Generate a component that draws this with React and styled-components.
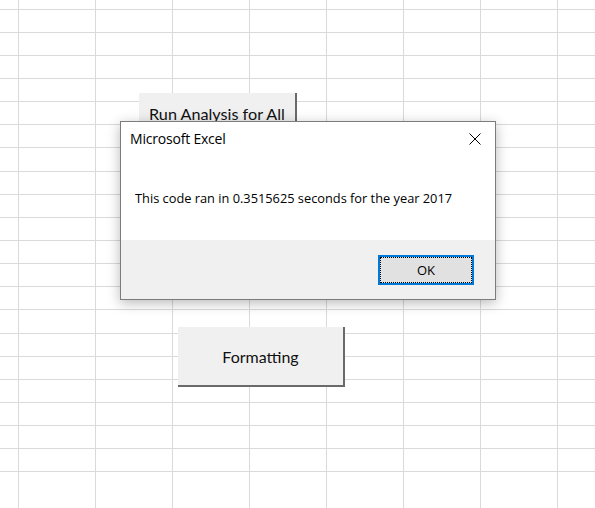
import React from "react";
import styled, { createGlobalStyle } from "styled-components";

const GlobalStyle = createGlobalStyle`
  html, body {
    margin: 0;
    padding: 0;
    background: #ffffff;
    overflow: hidden;
  }
`;

// row heights of the sheet, each one including its bottom grid line
const ROWS = [10, 23, 23, 23, 23, 23, 23, 24, 23, 23, 23, 23, 23, 23, 24, 23, 23, 23, 23, 23, 23, 40];
const COLS = [19, 77, 77, 77, 77, 77, 77, 77, 77];

const S = {
  Page: styled.div`
    position: relative;
    width: 595px;
    height: 508px;
    overflow: hidden;
    background: #ffffff;
  `,
  Sheet: styled.div`
    display: grid;
    grid-template-columns: ${COLS.map((c) => `${c}px`).join(" ")};
    grid-template-rows: ${ROWS.map((r) => `${r}px`).join(" ")};
  `,
  Cell: styled.div`
    box-sizing: border-box;
    border-right: 1px solid #dadada;
    border-bottom: 1px solid #dadada;
  `,
  FormButton: styled.div`
    position: absolute;
    left: ${(p) => p.$x}px;
    top: ${(p) => p.$y}px;
    width: ${(p) => p.$w}px;
    height: ${(p) => p.$h}px;
    box-sizing: border-box;
    display: flex;
    align-items: center;
    justify-content: center;
    background: #f0f0f0;
    border-right: 2px solid #6a6a6a;
    border-bottom: 2px solid #6a6a6a;
    font-family: Lato, "Liberation Sans", sans-serif;
    font-size: ${(p) => p.$size}px;
    color: #111111;
    white-space: nowrap;
  `,
  Dialog: styled.div`
    position: absolute;
    left: 120px;
    top: 121px;
    width: 376px;
    height: 179px;
    box-sizing: border-box;
    display: flex;
    flex-direction: column;
    background: #ffffff;
    border: 1px solid #7c7c7c;
    box-shadow: 0 3px 12px rgba(0, 0, 0, 0.28);
    font-family: "Open Sans", "Noto Sans", sans-serif;
  `,
  TitleBar: styled.div`
    height: 36px;
    display: flex;
    align-items: center;
    justify-content: space-between;
    padding-left: 9px;
    padding-bottom: 3px;
    box-sizing: border-box;
  `,
  Title: styled.span`
    font-size: 14px;
    color: #000000;
    letter-spacing: -0.2px;
  `,
  Close: styled.div`
    width: 40px;
    height: 33px;
    display: flex;
    align-items: center;
    justify-content: center;
  `,
  Message: styled.div`
    flex: 1;
    display: flex;
    align-items: center;
    padding-left: 14px;
    padding-bottom: 2px;
    font-size: 12.8px;
    color: #000000;
  `,
  Footer: styled.div`
    height: 59px;
    box-sizing: border-box;
    background: #f0f0f0;
    display: flex;
    justify-content: flex-end;
    align-items: flex-start;
    padding: 15px 21px 0 0;
  `,
  OkButton: styled.button`
    width: 96px;
    height: 30px;
    box-sizing: border-box;
    background: #e1e1e1;
    border: 2px solid #0078d7;
    outline: 1px dotted #000000;
    outline-offset: -3px;
    font-family: "Open Sans", "Noto Sans", sans-serif;
    font-size: 13px;
    color: #000000;
    padding: 0;
  `,
};

function CloseIcon() {
  return (
    <svg width="12" height="12" viewBox="0 0 12 12">
      <path d="M0.5 0.5 L11.5 11.5 M11.5 0.5 L0.5 11.5" stroke="#000" strokeWidth="1" fill="none" />
    </svg>
  );
}

function App() {
  const cells = [];
  ROWS.forEach((_, r) =>
    COLS.forEach((_, c) => cells.push(<S.Cell key={`${r}-${c}`} />))
  );

  return (
    <S.Page>
      <GlobalStyle />
      <S.Sheet>{cells}</S.Sheet>

      <S.FormButton $x={139} $y={93} $w={158} $h={42} $size={16.2}>
        Run Analysis for All
      </S.FormButton>
      <S.FormButton $x={178} $y={327} $w={167} $h={60} $size={16}>
        Formatting
      </S.FormButton>

      <S.Dialog>
        <S.TitleBar>
          <S.Title>Microsoft Excel</S.Title>
          <S.Close>
            <CloseIcon />
          </S.Close>
        </S.TitleBar>
        <S.Message>This code ran in 0.3515625 seconds for the year 2017</S.Message>
        <S.Footer>
          <S.OkButton>OK</S.OkButton>
        </S.Footer>
      </S.Dialog>
    </S.Page>
  );
}

export default App;
